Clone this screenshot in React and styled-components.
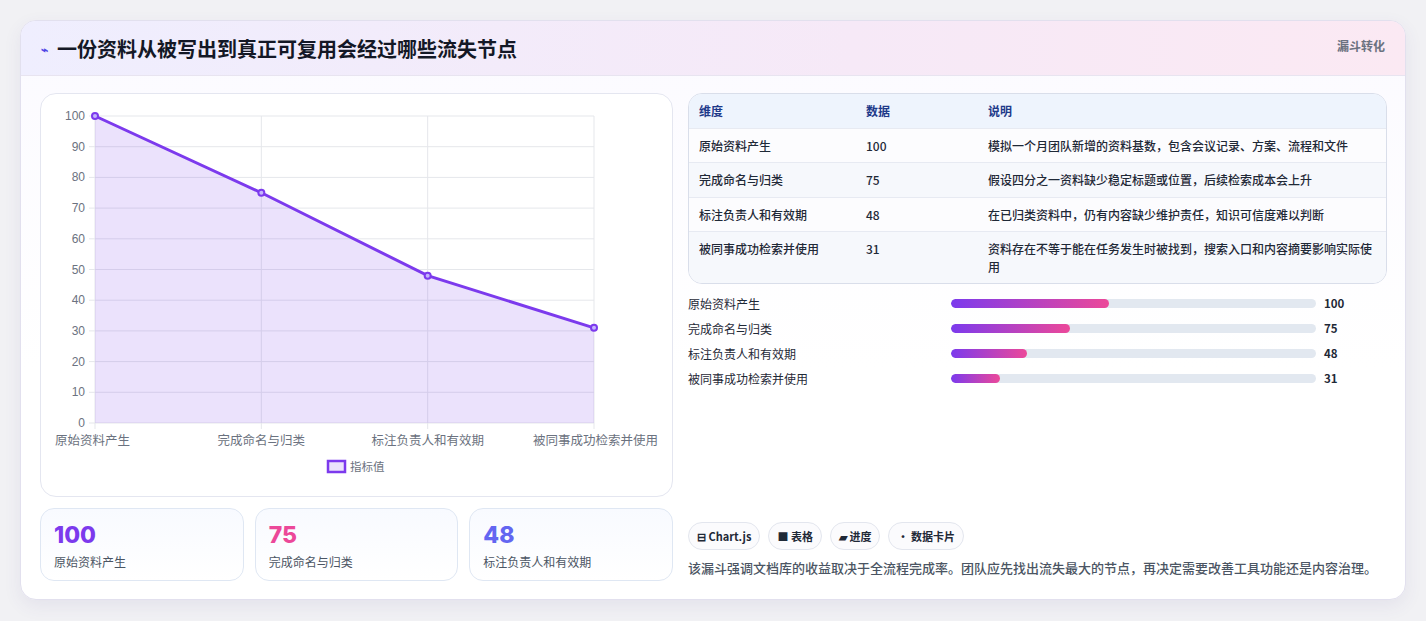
import React from "react";
import styled, { createGlobalStyle } from "styled-components";

const G = createGlobalStyle`
  body { margin:0; background:#f1f1f4; font-family: "Noto Sans CJK SC", "Noto Sans", sans-serif; }
`;
const data = [
  { name: "原始资料产生", v: 100, d: "模拟一个月团队新增的资料基数，包含会议记录、方案、流程和文件" },
  { name: "完成命名与归类", v: 75, d: "假设四分之一资料缺少稳定标题或位置，后续检索成本会上升" },
  { name: "标注负责人和有效期", v: 48, d: "在已归类资料中，仍有内容缺少维护责任，知识可信度难以判断" },
  { name: "被同事成功检索并使用", v: 31, d: "资料存在不等于能在任务发生时被找到，搜索入口和内容摘要影响实际使用" },
];
const Page = styled.div`padding:20px 20px 21px 20px;`;
const Card = styled.div`
  background:linear-gradient(180deg,#fbfaff,#ffffff 60%); border:1px solid #e2e0ee; border-radius:16px;
  box-shadow:0 6px 18px rgba(80,70,140,.08); overflow:hidden; height:580px; box-sizing:border-box;
`;
const Header = styled.div`
  height:55px; box-sizing:border-box; display:flex; justify-content:space-between; align-items:flex-start;
  padding:0 20px; background:linear-gradient(90deg,#efeefe,#f6e9f7 60%,#fbe9f3); border-bottom:1px solid #e8e4f0;
`;
const Title = styled.h1`margin:14px 0 0; font-size:20px; font-weight:700; color:#141826; display:flex; align-items:center; gap:9px; line-height:28px;`;
const Tag = styled.span`margin-top:16px; font-size:12px; font-weight:700; color:#6b7280;`;
const Body = styled.div`display:grid; grid-template-columns:633px 699px; gap:15px; padding:17px 19px 0;`;
const Col = styled.div`display:flex; flex-direction:column;`;
const Panel = styled.div`background:#fff; border:1px solid #e4e6f0; border-radius:16px; height:404px; box-sizing:border-box;`;
const Kpis = styled.div`display:grid; grid-template-columns:repeat(3,1fr); gap:11px; margin-top:11px;`;
const Kpi = styled.div`border:1px solid #dfe7f3; border-radius:14px; height:73px; box-sizing:border-box; padding:12px 13px;
  background:linear-gradient(180deg,#f8faff,#fff);`;
const KNum = styled.div`font-family:"Inter",sans-serif; font-weight:800; font-size:23px; line-height:28px; color:${p=>p.c};`;
const KLab = styled.div`font-size:12px; color:#4b5563; margin-top:4px;`;
const Table = styled.div`border:1px solid #d9deea; border-radius:14px; overflow:hidden; background:#fafbfe;`;
const Row = styled.div`display:grid; grid-template-columns:167px 122px 1fr; padding:8px 10px; font-size:12px; line-height:17.5px;
  color:${p=>p.h?"#1e3a8a":"#1f2937"}; background:${p=>p.h?"#eef4fd":p.alt?"#f6f8fc":"#fcfcfe"}; border-top:${p=>p.first?"none":"1px solid #e7eaf2"};
  font-weight:${p=>p.h?600:500};`;
const Bars = styled.div`display:flex; flex-direction:column; gap:7px; margin-top:10px;`;
const BarRow = styled.div`display:grid; grid-template-columns:255px 365px auto; align-items:center; gap:8px; font-size:12px; color:#1f2937; height:18px;`;
const Track = styled.div`height:9px; background:#e2e8f0; border-radius:5px; overflow:hidden;`;
const Fill = styled.div`height:100%; border-radius:5px; background:linear-gradient(90deg,#7c3aed,#ec4899);`;
const Val = styled.span`font-weight:700; font-size:11.5px;`;
const Chips = styled.div`display:flex; gap:8px; margin-top:135px;`;
const Chip = styled.span`border:1px solid #e3e6ee; border-radius:14px; padding:5px 8px; font-size:11px; font-weight:700; color:#1f2937; background:#fbfbfd; display:flex; gap:4px; align-items:center;`;
const Foot = styled.p`margin:8px 0 0; font-size:13px; font-weight:500; color:#4b5563;`;

function Chart() {
  const x0 = 54, x1 = 553, y0 = 22, y1 = 329;
  const px = i => x0 + (x1 - x0) * i / 3, py = v => y1 - (y1 - y0) * v / 100;
  const pts = data.map((d, i) => [px(i), py(d.v)]);
  const line = pts.map(p => p.join(",")).join(" ");
  return (
    <svg width="633" height="404" style={{ display: "block" }}>
      {[0,10,20,30,40,50,60,70,80,90,100].map(t => (
        <g key={t}>
          <line x1={x0-6} x2={x1} y1={py(t)} y2={py(t)} stroke="#e5e7eb" />
          <text x={x0-10} y={py(t)+4} textAnchor="end" fontSize="12" fill="#6b7280" fontFamily="Liberation Sans">{t}</text>
        </g>
      ))}
      {[0,1,2,3].map(i => <line key={i} x1={px(i)} x2={px(i)} y1={y0} y2={y1+6} stroke="#e5e7eb" />)}
      <polygon points={`${x0},${y1} ${line} ${x1},${y1}`} fill="rgba(124,58,237,0.15)" />
      <polyline points={line} fill="none" stroke="#7c3aed" strokeWidth="3" />
      {pts.map((p, i) => <circle key={i} cx={p[0]} cy={p[1]} r="3" fill="#c4b5fd" stroke="#7c3aed" strokeWidth="2" />)}
      {data.map((d, i) => (
        <text key={i} x={i===0?14:i===3?617:px(i)} y={351} textAnchor={i===0?"start":i===3?"end":"middle"} fontSize="12.5" fill="#6b7280">{d.name}</text>
      ))}
      <rect x="287" y="367" width="17" height="11" fill="rgba(124,58,237,0.15)" stroke="#7c3aed" strokeWidth="2.5" />
      <text x="309" y="377" fontSize="11.5" fill="#6b7280">指标值</text>
    </svg>
  );
}

export default function App() {
  const colors = ["#7c3aed", "#ec4899", "#6366f1"];
  return (
    <Page>
      <G />
      <Card>
        <Header>
          <Title><span style={{ color: "#4f46e5", fontSize: 12 }}>⌁</span>一份资料从被写出到真正可复用会经过哪些流失节点</Title>
          <Tag>漏斗转化</Tag>
        </Header>
        <Body>
          <Col>
            <Panel><Chart /></Panel>
            <Kpis>
              {data.slice(0, 3).map((d, i) => (
                <Kpi key={i}><KNum c={colors[i]}>{d.v}</KNum><KLab>{d.name}</KLab></Kpi>
              ))}
            </Kpis>
          </Col>
          <Col>
            <Table>
              <Row h first><span>维度</span><span>数据</span><span>说明</span></Row>
              {data.map((d, i) => (
                <Row key={i} alt={i % 2 === 1}><span>{d.name}</span><span>{d.v}</span><span>{d.d}</span></Row>
              ))}
            </Table>
            <Bars>
              {data.map((d, i) => (
                <BarRow key={i}><span>{d.name}</span><Track><Fill style={{ width: `${d.v * 0.433}%` }} /></Track><Val>{d.v}</Val></BarRow>
              ))}
            </Bars>
            <Chips>
              <Chip>⊟ Chart.js</Chip><Chip>■ 表格</Chip><Chip>▰ 进度</Chip><Chip>• 数据卡片</Chip>
            </Chips>
            <Foot>该漏斗强调文档库的收益取决于全流程完成率。团队应先找出流失最大的节点，再决定需要改善工具功能还是内容治理。</Foot>
          </Col>
        </Body>
      </Card>
    </Page>
  );
}
